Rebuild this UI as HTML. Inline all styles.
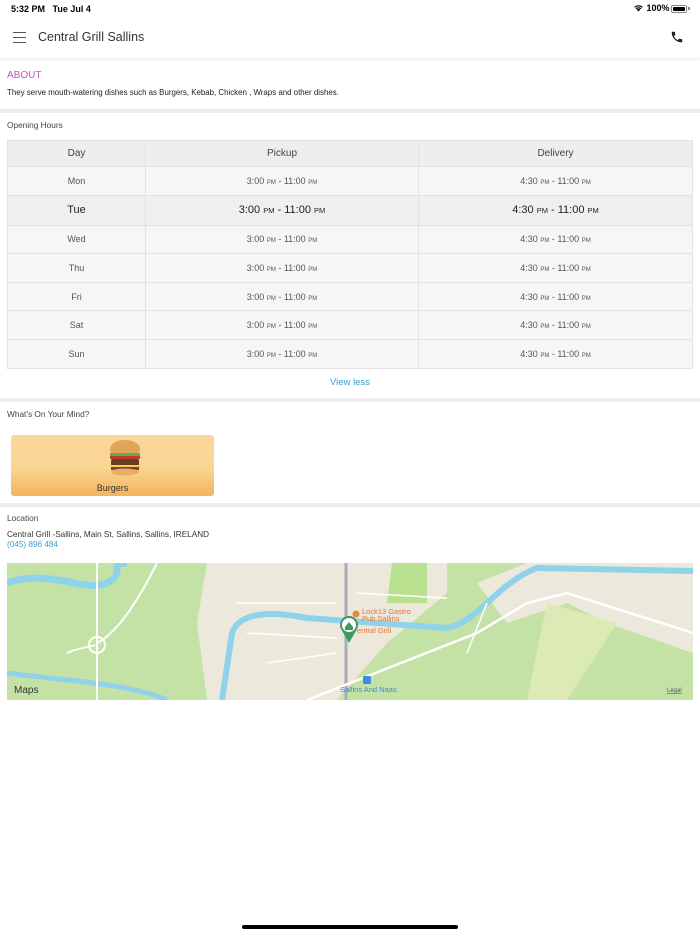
<!DOCTYPE html>
<html><head><meta charset="utf-8"><style>
*{margin:0;padding:0;box-sizing:border-box}
body{width:700px;height:934px;background:#fff;font-family:"Liberation Sans",sans-serif;color:#333;position:relative;overflow:hidden}
.a{position:absolute}
table{border-collapse:collapse;position:absolute;left:7px;top:140px;width:686px;font-size:9px;color:#555}
td{border:1px solid #e2e2e2;text-align:center;background:#f6f6f6}
tr.h td{background:#eeeeee;font-size:10px;color:#444;height:26px}
tr.r td{height:28.6px}
tr.t td{height:30px;background:#efefef;font-size:11px;color:#222}
small{font-size:6px}
tr.t small{font-size:7.5px}
.sep{position:absolute;left:0;width:700px;height:4px;background:#ececec}
</style></head><body>
<div class="a" style="left:11px;top:4px;font-size:9px;color:#000;font-weight:bold">5:32 PM&nbsp;&nbsp;&nbsp;Tue Jul 4</div>
<div class="a" style="left:633px;top:3px;font-size:9px;color:#000;font-weight:bold">
<svg width="11" height="9" viewBox="0 0 11 9" style="vertical-align:-1px"><path d="M5.5 8.5L3.8 6.6a2.4 2.4 0 0 1 3.4 0z M2.6 5.4a4.2 4.2 0 0 1 5.8 0l-.8.8a3 3 0 0 0-4.2 0z M1.2 4a6.2 6.2 0 0 1 8.6 0l-.8.8a5 5 0 0 0-7 0z" fill="#000"/></svg> 100%</div>
<div class="a" style="left:671px;top:5px;width:16px;height:8px;border:1px solid #888;border-radius:2px;padding:1px"><div style="width:100%;height:100%;background:#000;border-radius:1px"></div></div>
<div class="a" style="left:688px;top:7px;width:1.5px;height:3px;background:#888"></div>
<div class="a" style="left:0;top:20px;width:700px;height:38px;box-shadow:0 2px 3px rgba(0,0,0,.08)"></div>
<div class="a" style="left:13px;top:32px;width:13px;height:1.3px;background:#555;box-shadow:0 5px 0 #555,0 10px 0 #555"></div>
<div class="a" style="left:38px;top:30px;font-size:12.5px;color:#333">Central Grill Sallins</div>
<svg class="a" style="left:670px;top:30px" width="14" height="14" viewBox="0 0 24 24"><path d="M6.6 10.8c1.4 2.8 3.8 5.1 6.6 6.6l2.2-2.2c.3-.3.7-.4 1-.2 1.1.4 2.3.6 3.6.6.6 0 1 .4 1 1V20c0 .6-.4 1-1 1C10.6 21 3 13.4 3 4c0-.6.4-1 1-1h3.5c.6 0 1 .4 1 1 0 1.3.2 2.5.6 3.6.1.3 0 .7-.2 1z" fill="#222"/></svg>
<div class="a" style="left:7px;top:70px;font-size:10px;color:#c452c4">ABOUT</div>
<div class="a" style="left:7px;top:88px;font-size:7.9px;color:#222">They serve mouth-watering dishes such as Burgers, Kebab, Chicken , Wraps and other dishes.</div>
<div class="sep" style="top:109px"></div>
<div class="a" style="left:7px;top:120px;font-size:8.3px;color:#444">Opening Hours</div>
<table>
<tr class="h"><td style="width:138px">Day</td><td style="width:273px">Pickup</td><td>Delivery</td></tr>
<tr class="r"><td>Mon</td><td>3:00 <small>PM</small> - 11:00 <small>PM</small></td><td>4:30 <small>PM</small> - 11:00 <small>PM</small></td></tr>
<tr class="t"><td>Tue</td><td>3:00 <small>PM</small> - 11:00 <small>PM</small></td><td>4:30 <small>PM</small> - 11:00 <small>PM</small></td></tr>
<tr class="r"><td>Wed</td><td>3:00 <small>PM</small> - 11:00 <small>PM</small></td><td>4:30 <small>PM</small> - 11:00 <small>PM</small></td></tr>
<tr class="r"><td>Thu</td><td>3:00 <small>PM</small> - 11:00 <small>PM</small></td><td>4:30 <small>PM</small> - 11:00 <small>PM</small></td></tr>
<tr class="r"><td>Fri</td><td>3:00 <small>PM</small> - 11:00 <small>PM</small></td><td>4:30 <small>PM</small> - 11:00 <small>PM</small></td></tr>
<tr class="r"><td>Sat</td><td>3:00 <small>PM</small> - 11:00 <small>PM</small></td><td>4:30 <small>PM</small> - 11:00 <small>PM</small></td></tr>
<tr class="r"><td>Sun</td><td>3:00 <small>PM</small> - 11:00 <small>PM</small></td><td>4:30 <small>PM</small> - 11:00 <small>PM</small></td></tr>
</table>
<div class="a" style="left:0;width:700px;top:377px;text-align:center;font-size:9.5px;color:#3a9fd0">View less</div>
<div class="sep" style="top:398px"></div>
<div class="a" style="left:7px;top:409px;font-size:8.3px;color:#444">What's On Your Mind?</div>
<div class="a" style="left:11px;top:435px;width:203px;height:61px;border-radius:3px;background:linear-gradient(#fad89a 0%,#f9d592 55%,#f3b45e 100%)"></div>
<svg class="a" style="left:107px;top:439px" width="36" height="38" viewBox="0 0 36 38">
<ellipse cx="18" cy="10" rx="15" ry="9" fill="#e0a45a"/><rect x="3" y="14" width="30" height="3" fill="#5bb04a"/><rect x="3" y="17" width="30" height="3" fill="#c0392b"/><rect x="4" y="20" width="28" height="7" rx="2" fill="#6b3a22"/><rect x="3" y="26" width="30" height="2.5" fill="#f2d24a"/><rect x="4" y="28" width="28" height="3" fill="#7a4226"/><ellipse cx="18" cy="33" rx="14" ry="3.5" fill="#e9ad68"/></svg>
<div class="a" style="left:11px;width:203px;top:483px;text-align:center;font-size:9px;color:#333">Burgers</div>
<div class="sep" style="top:503px"></div>
<div class="a" style="left:7px;top:513px;font-size:8.3px;color:#444">Location</div>
<div class="a" style="left:7px;top:530px;font-size:8.2px;color:#333">Central Grill -Sallins, Main St, Sallins, Sallins, IRELAND</div>
<div class="a" style="left:7px;top:540px;font-size:8.2px;color:#3a9fd0">(045) 896 484</div>
<svg class="a" style="left:7px;top:563px" width="686" height="137" viewBox="0 0 686 137">
<rect width="686" height="137" fill="#c4e2a6"/>
<path d="M200 0H440V30L380 80L330 137H200L190 60Z" fill="#ece8dc"/>
<path d="M470 20L520 0H686V90L600 60L560 40L500 60Z" fill="#ece8dc"/>
<path d="M385 0H420V40H380Z" fill="#b8e08e"/>
<path d="M540 40L610 60L560 137H520Z" fill="#dcebb6"/>
<path d="M0 20C40 5 80 30 100 20S100 0 120 0" stroke="#8fd3ea" stroke-width="7" fill="none"/>
<path d="M0 110C60 118 120 120 160 137" stroke="#8fd3ea" stroke-width="5" fill="none"/>
<path d="M215 137L225 70C230 55 250 45 300 55L440 65C470 60 490 20 530 5L686 8" stroke="#8fd3ea" stroke-width="6" fill="none"/>
<path d="M90 0V137M90 80C110 70 130 40 150 0M60 90C70 85 80 85 88 82" stroke="#fff" stroke-width="2" fill="none"/>
<circle cx="90" cy="82" r="8" stroke="#fff" stroke-width="2" fill="none"/>
<path d="M339 0V137" stroke="#aab" stroke-width="3"/>
<path d="M300 137L470 70L520 40L560 30L686 70" stroke="#fff" stroke-width="2.5" fill="none"/>
<path d="M230 40L330 40M240 70L330 75M260 100L330 90M350 30L440 35M480 40L460 90" stroke="#fff" stroke-width="1.5" fill="none"/>
<path d="M342 80L334 66A9 9 0 1 1 350 66Z" fill="#3f9a5f"/><circle cx="342" cy="62" r="7" fill="#fff"/><path d="M338 64L342 59L346 64V67H338Z" fill="#3f9a5f"/>
<circle cx="349" cy="51" r="3.5" fill="#f0853b"/>
<text x="355" y="51" font-size="7.5" fill="#e8742c" font-family="Liberation Sans">Lock13 Gastro</text>
<text x="355" y="58" font-size="7.5" fill="#e8742c" font-family="Liberation Sans">Pub Sallins</text>
<text x="350" y="70" font-size="7.5" fill="#e8742c" font-family="Liberation Sans">entral Grill</text>
<rect x="356" y="113" width="8" height="8" rx="1.5" fill="#3a8de0"/>
<text x="333" y="129" font-size="7.5" fill="#3a8de0" font-family="Liberation Sans">Sallins And Naas</text>
<text x="7" y="130" font-size="10" fill="#333" font-family="Liberation Sans"> Maps</text>
<text x="660" y="129" font-size="6" fill="#555" font-family="Liberation Sans" text-decoration="underline">Legal</text>
</svg>
<div class="a" style="left:242px;top:925px;width:216px;height:4px;border-radius:2px;background:#000"></div>
</body></html>
